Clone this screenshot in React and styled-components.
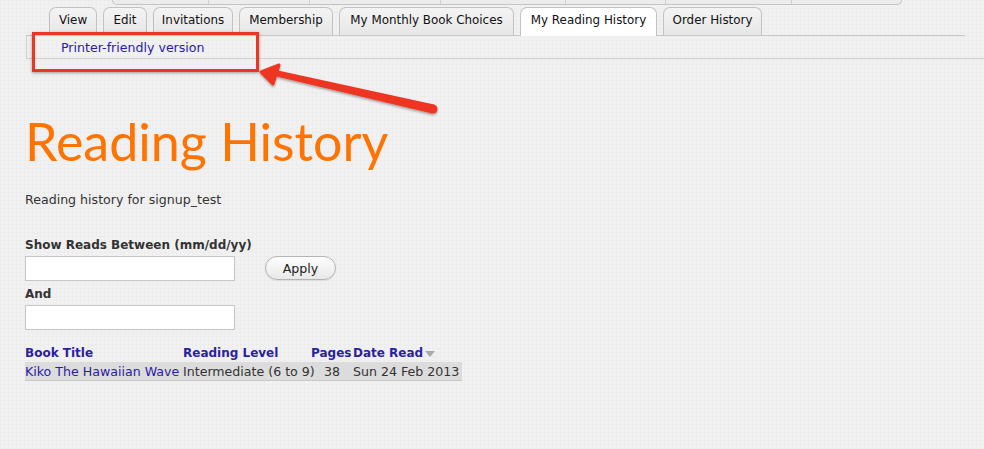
import React from "react";
import styled, { createGlobalStyle } from "styled-components";

const Global = createGlobalStyle`
  html, body { margin: 0; padding: 0; }
  body {
    background: #f1f1f1;
    font-family: "DejaVu Sans", Verdana, sans-serif;
    font-size: 12.6px;
    color: #333;
  }
`;

const Page = styled.div`
  position: relative;
  width: 984px;
  height: 449px;
  overflow: hidden;
  background-color: #f1f1f1;
  background-image:
    linear-gradient(rgba(0,0,0,0.012) 1px, transparent 1px),
    linear-gradient(90deg, rgba(0,0,0,0.012) 1px, transparent 1px);
  background-size: 4px 4px;
`;

const TopMenu = styled.div`
  display: flex;
  margin-left: 112px;
  width: 788px;
  height: 4px;
  border: 1px solid #c4c4c4;
  border-top: none;
  border-radius: 0 0 7px 7px;
  background: #ececec;
`;

const MenuSeg = styled.div`
  width: ${(p) => p.w}px;
  border-right: ${(p) => (p.last ? "none" : "1px solid #cfcfcf")};
`;

const TabBar = styled.div`
  display: flex;
  align-items: flex-end;
  gap: 6px;
  margin-top: 2px;
  margin-left: 26px;
  width: 939px;
  height: 29px;
  padding-left: 23px;
  box-sizing: border-box;
  border-bottom: 1px solid #c8c8c8;
`;

const Tab = styled.div`
  box-sizing: border-box;
  width: ${(p) => p.w}px;
  height: ${(p) => (p.active ? "29px" : "28px")};
  margin-bottom: ${(p) => (p.active ? "-1px" : "0")};
  display: flex;
  align-items: center;
  justify-content: center;
  padding-bottom: ${(p) => (p.active ? "4px" : "3px")};
  border: 1px solid #c2c2c2;
  border-bottom: none;
  border-radius: 7px 7px 0 0;
  background: ${(p) => (p.active ? "#fff" : "linear-gradient(#f4f4f4, #e6e6e6)")};
  color: #111;
  font-size: 11.9px;
  white-space: nowrap;
`;

const SubTabs = styled.div`
  margin-left: 26px;
  height: 23px;
  border-left: 1px solid #d0d0d0;
  border-bottom: 1px solid #d0d0d0;
  padding-left: 34px;
  display: flex;
  align-items: center;
  box-sizing: border-box;
`;

const Link = styled.a`
  color: #2b1aa6;
  text-decoration: none;
  font-size: 12.6px;
`;

const RedBox = styled.div`
  position: absolute;
  left: 32px;
  top: 32px;
  width: 221px;
  height: 34px;
  border: 3px solid #ee3524;
  box-shadow: 0 1px 3px rgba(0,0,0,0.35);
`;

const Arrow = styled.svg`
  position: absolute;
  left: 255px;
  top: 58px;
  overflow: visible;
`;

const Content = styled.div`
  padding-left: 25px;
`;

const Title = styled.h1`
  margin: 52px 0 0 0;
  font-family: Lato, "Noto Sans", sans-serif;
  font-weight: 400;
  font-size: 52px;
  line-height: 60px;
  color: #ff7300;
`;

const Intro = styled.p`
  margin: 21px 0 0 0;
  font-size: 12.6px;
  line-height: 16px;
  color: #333;
`;

const FilterForm = styled.div`
  margin-top: 29px;
  display: flex;
  align-items: flex-start;
  gap: 30px;
`;

const Fields = styled.div`
  width: 210px;
  display: flex;
  flex-direction: column;
`;

const Label = styled.label`
  font-weight: bold;
  font-size: 12px;
  color: #333;
  line-height: 16px;
  white-space: nowrap;
  margin-top: ${(p) => p.mt || 0}px;
`;

const Input = styled.input`
  margin-top: 3px;
  width: 210px;
  height: 25px;
  box-sizing: border-box;
  border: 1px solid #c6c6c6;
  background: #fff;
`;

const Button = styled.button`
  margin-top: 19px;
  width: 71px;
  height: 24px;
  border-radius: 12px;
  border: 1px solid #b4b4b4;
  background: linear-gradient(#fdfdfd, #e9e9e9);
  font-family: "DejaVu Sans", Verdana, sans-serif;
  font-size: 12.6px;
  color: #222;
  box-shadow: 0 1px 1px rgba(0,0,0,0.08);
`;

const Table = styled.table`
  margin-top: 14px;
  width: 437px;
  table-layout: fixed;
  border-collapse: collapse;
  font-size: 12.6px;
`;

const Th = styled.th`
  text-align: left;
  padding: 0;
  height: 18px;
  color: #2b1f9e;
  font-weight: bold;
  font-size: 12px;
  white-space: nowrap;
  overflow: visible;
  width: ${(p) => (p.w ? p.w + "px" : "auto")};
`;

const Row = styled.tr`
  background: #dcdcdc;
  border-bottom: 1px solid #c8c8c8;
`;

const Td = styled.td`
  padding: 0;
  height: 18px;
  white-space: nowrap;
  overflow: visible;
  color: #333;
  text-align: ${(p) => p.align || "left"};
`;

const SortArrow = styled.span`
  display: inline-block;
  width: 0;
  height: 0;
  margin-left: 2px;
  border-left: 5px solid transparent;
  border-right: 5px solid transparent;
  border-top: 6px solid #a9a9a9;
  vertical-align: middle;
`;

const menuSegs = [96, 100, 131, 125, 100, 126, 110];
const tabs = [
  ["View", 48],
  ["Edit", 44],
  ["Invitations", 80],
  ["Membership", 94],
  ["My Monthly Book Choices", 175],
  ["My Reading History", 137, true],
  ["Order History", 99],
];

export default function App() {
  return (
    <Page>
      <Global />
      <TopMenu>
        {menuSegs.map((w, i) => (
          <MenuSeg key={i} w={w} last={i === menuSegs.length - 1} />
        ))}
      </TopMenu>
      <TabBar>
        {tabs.map(([t, w, active]) => (
          <Tab key={t} w={w} active={active}>
            {t}
          </Tab>
        ))}
      </TabBar>
      <SubTabs>
        <Link href="#">Printer-friendly version</Link>
      </SubTabs>
      <RedBox />
      <Arrow width="190" height="60" viewBox="0 0 190 60">
        <defs>
          <filter id="sh" x="-10%" y="-30%" width="120%" height="160%">
            <feDropShadow dx="0" dy="1.5" stdDeviation="1.2" floodColor="#000" floodOpacity="0.35" />
          </filter>
        </defs>
        <g filter="url(#sh)" fill="#ee3524">
          <polygon points="19.4,17.9 20.6,12.1 179,46.6 177,55.4" />
          <circle cx="178" cy="51" r="4.5" />
          <polygon
            points="6,14 24,7 18,26"
            stroke="#ee3524"
            strokeWidth="3"
            strokeLinejoin="round"
          />
        </g>
      </Arrow>
      <Content>
        <Title>Reading History</Title>
        <Intro>Reading history for signup_test</Intro>
        <FilterForm>
          <Fields>
            <Label>Show Reads Between (mm/dd/yy)</Label>
            <Input />
            <Label mt={5}>And</Label>
            <Input />
          </Fields>
          <Button>Apply</Button>
        </FilterForm>
        <Table>
          <colgroup>
            <col style={{ width: 158 }} />
            <col style={{ width: 128 }} />
            <col style={{ width: 42 }} />
            <col style={{ width: 109 }} />
          </colgroup>
          <thead>
            <tr>
              <Th>Book Title</Th>
              <Th>Reading Level</Th>
              <Th>Pages</Th>
              <Th>
                Date Read
                <SortArrow />
              </Th>
            </tr>
          </thead>
          <tbody>
            <Row>
              <Td>
                <Link href="#">Kiko The Hawaiian Wave</Link>
              </Td>
              <Td>Intermediate (6 to 9)</Td>
              <Td align="center">38</Td>
              <Td>Sun 24 Feb 2013</Td>
            </Row>
          </tbody>
        </Table>
      </Content>
    </Page>
  );
}
